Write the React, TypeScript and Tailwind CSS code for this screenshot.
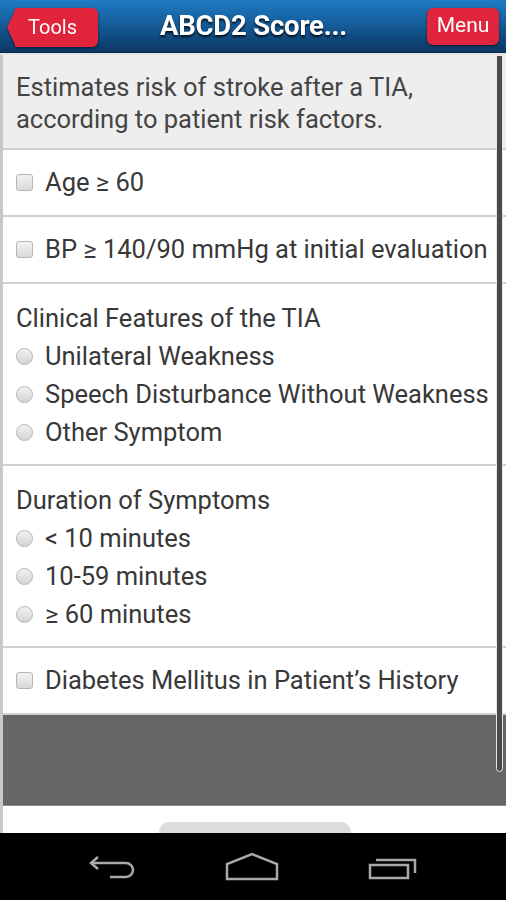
import React from "react";

function Checkbox() {
  return (
    <span className="w-[17px] h-[17px] shrink-0 rounded-[3px] border border-[#b5b5b5] bg-gradient-to-b from-[#f2f2f2] to-[#d9d9d9]" />
  );
}

function Radio() {
  return (
    <span className="w-[17px] h-[17px] shrink-0 rounded-full border border-[#b5b5b5] bg-gradient-to-b from-[#f2f2f2] to-[#d4d4d4]" />
  );
}

function CheckRow({ label }: { label: string }) {
  return (
    <div className="flex items-center gap-[12px] h-[67px] shrink-0 pl-[13px] border-b-2 border-[#cfcfcf]">
      <Checkbox />
      <span>{label}</span>
    </div>
  );
}

function RadioGroup({ title, options }: { title: string; options: string[] }) {
  return (
    <div className="pt-[15px] pb-[13px] pl-[13px] border-b-2 border-[#cfcfcf]">
      <div className="h-[38px] leading-[38px]">{title}</div>
      {options.map((o) => (
        <div key={o} className="flex items-center gap-[12px] h-[38px]">
          <Radio />
          <span>{o}</span>
        </div>
      ))}
    </div>
  );
}

export default function App() {
  return (
    <div
      className="w-[506px] h-[900px] flex flex-col bg-white overflow-hidden"
      style={{ fontFamily: "Roboto, 'Liberation Sans', sans-serif" }}
    >
      {/* top bar */}
      <div className="h-[55px] shrink-0 flex flex-col">
        <div className="h-[53px] flex items-center justify-between px-[7px] bg-gradient-to-b from-[#1f7cc4] via-[#145a96] to-[#0c3763] border-b border-[#0a2a4a]">
          <div className="flex items-center mt-[2px] drop-shadow-[0_1px_1px_rgba(0,0,0,0.6)]">
            <svg width="9" height="39" viewBox="0 0 9 39" className="-mr-px">
              <path d="M9 0 L0 19.5 L9 39 Z" fill="#e0243c" />
            </svg>
            <div className="h-[39px] w-[83px] flex items-center justify-center rounded-r-[6px] bg-[#e0243c] text-white text-[20px] pr-[8px]">
              Tools
            </div>
          </div>
          <div className="text-white font-bold text-[27.5px] tracking-[-0.2px] drop-shadow-[0_2px_1px_rgba(0,0,0,0.8)] -ml-[18px]">
            ABCD2 Score...
          </div>
          <div className="h-[37px] w-[72px] flex items-center justify-center rounded-[6px] bg-[#e0243c] text-white text-[21px] drop-shadow-[0_1px_1px_rgba(0,0,0,0.6)]">
            Menu
          </div>
        </div>
        <div className="h-[2px] bg-[#e4e4e4]" />
      </div>

      {/* content */}
      <div className="relative flex-1 flex flex-col border-l-[3px] border-[#c8c8c8] text-[25.5px] text-[#383838]">
        <div className="h-[95px] shrink-0 bg-[#eeeeee] border-b-2 border-[#cfcfcf] pl-[13px] pt-[16px] leading-[32px] text-[#444]">
          Estimates risk of stroke after a TIA,
          <br />
          according to patient risk factors.
        </div>
        <CheckRow label="Age ≥ 60" />
        <CheckRow label="BP ≥ 140/90 mmHg at initial evaluation" />
        <RadioGroup
          title="Clinical Features of the TIA"
          options={["Unilateral Weakness", "Speech Disturbance Without Weakness", "Other Symptom"]}
        />
        <RadioGroup title="Duration of Symptoms" options={["< 10 minutes", "10-59 minutes", "≥ 60 minutes"]} />
        <CheckRow label="Diabetes Mellitus in Patient’s History" />
        <div className="h-[91px] shrink-0 bg-[#666666] border-b border-[#888]" />
        <div className="flex-1 flex justify-center items-end">
          <div className="w-[192px] h-[11px] rounded-t-[10px] bg-[#dcdcdc]" />
        </div>

        {/* scrollbar */}
        <div className="absolute right-[3px] top-0 h-[717px] w-[7px] rounded-b-[4px] border border-[#e8e8e8] bg-[#4a4a4a]" />
      </div>

      {/* nav bar */}
      <div className="h-[67px] shrink-0 bg-black flex items-center justify-center gap-[89px]">
        <svg width="48" height="26" viewBox="0 0 48 26" fill="none" stroke="#a9a9a9" strokeWidth="2.5">
          <path d="M10 3 L3 9 L10 15" />
          <path d="M3 9 H38 a7 7 0 0 1 0 14 H22" />
        </svg>
        <svg width="54" height="30" viewBox="0 0 54 30" fill="none" stroke="#a9a9a9" strokeWidth="2.5">
          <path d="M2 27 V12 L27 2 L52 12 V27 Z" />
        </svg>
        <svg width="50" height="26" viewBox="0 0 50 26" fill="none" stroke="#a9a9a9" strokeWidth="2.5">
          <rect x="2" y="11" width="38" height="13" />
          <path d="M8 6 H47 V19" />
        </svg>
      </div>
    </div>
  );
}
